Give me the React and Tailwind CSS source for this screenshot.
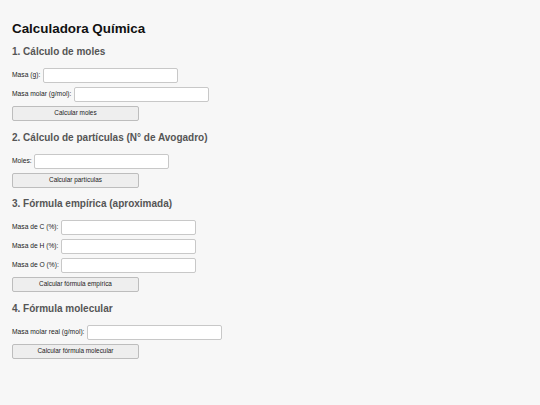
import React, { useState } from "react";

const sections = [
  {
    title: "1. Cálculo de moles",
    fields: ["Masa (g):", "Masa molar (g/mol):"],
    button: "Calcular moles",
  },
  {
    title: "2. Cálculo de partículas (N° de Avogadro)",
    fields: ["Moles:"],
    button: "Calcular partículas",
  },
  {
    title: "3. Fórmula empírica (aproximada)",
    fields: ["Masa de C (%):", "Masa de H (%):", "Masa de O (%):"],
    button: "Calcular fórmula empírica",
  },
  {
    title: "4. Fórmula molecular",
    fields: ["Masa molar real (g/mol):"],
    button: "Calcular fórmula molecular",
  },
];

function Field({ label }) {
  const [value, setValue] = useState("");
  return (
    <div className="flex items-center gap-[2.5px] mb-[4px]">
      <label className="text-[6.7px] leading-none text-[#222]">{label}</label>
      <input
        type="number"
        value={value}
        onChange={(e) => setValue(e.target.value)}
        className="w-[135px] h-[15px] bg-white border border-[#c8c8c8] rounded-[2px] px-1 text-[7px] outline-none"
      />
    </div>
  );
}

export default function App() {
  return (
    <div className="min-h-[405px] bg-[#f7f7f7] px-3 pt-[21px] font-['Liberation_Sans',Arial,sans-serif] text-[#111]">
      <h1 className="text-[13.4px] leading-[16px] font-bold">Calculadora Química</h1>
      {sections.map((s, i) => (
        <section key={s.title}>
          <h2
            className={`text-[10px] leading-[12px] font-bold text-[#555] mb-[10px] ${
              i === 0 ? "mt-[9px]" : "mt-[10.5px]"
            }`}
          >
            {s.title}
          </h2>
          {s.fields.map((f) => (
            <Field key={f} label={f} />
          ))}
          <button
            type="button"
            className="block w-[127px] h-[15px] bg-[#eeeeee] border border-[#bdbdbd] rounded-[2px] text-[6.4px] leading-none text-[#222]"
          >
            {s.button}
          </button>
        </section>
      ))}
    </div>
  );
}
